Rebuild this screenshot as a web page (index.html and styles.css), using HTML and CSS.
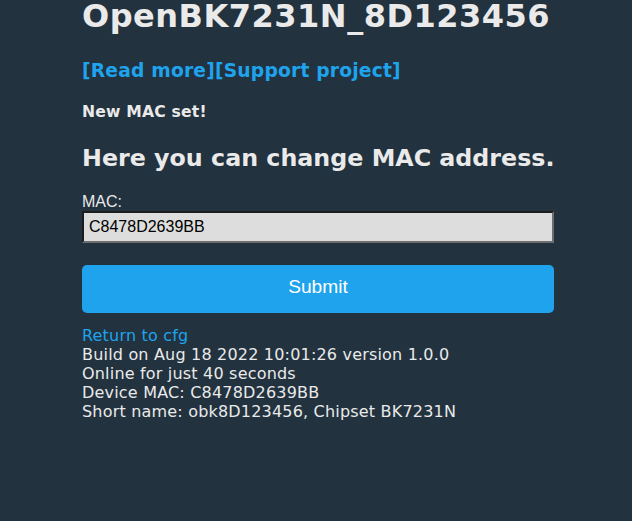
FILE: index.html
```html
<!DOCTYPE html>
<html lang="en">
<head>
    <meta charset="UTF-8">
    <meta name="viewport" content="width=device-width, initial-scale=1.0">
    <title>OpenBK7231N_8D123456</title>
    <link rel="stylesheet" href="styles.css">
</head>
<body>
    <div class="page">
        <h1 class="title">OpenBK7231N_8D123456</h1>
        <h3 class="links"><a href="#">[Read more]</a><a href="#">[Support project]</a></h3>

        <h4 class="notice">New MAC set!</h4>
        <h2 class="heading">Here you can change MAC address.</h2>

        <form id="mac-form">
            <label for="mac">MAC:</label>
            <input type="text" id="mac" value="C8478D2639BB">
            <button type="submit">Submit</button>
        </form>

        <div class="info">
            <a href="#">Return to cfg</a><br>
            Build on Aug 18 2022 10:01:26 version 1.0.0<br>
            Online for just 40 seconds<br>
            Device MAC: C8478D2639BB<br>
            Short name: obk8D123456, Chipset BK7231N
        </div>
    </div>
</body>
</html>
```

FILE: styles.css
```css
body {
    margin: 0;
    padding-left: 4px;
    background-color: #22323f;
    color: #eaeaea;
    font-family: "DejaVu Sans", Verdana, sans-serif;
    font-size: 16px;
}
a {
    color: #1fa3ec;
    text-decoration: none;
}
.page {
    width: 472px;
    margin: 0 auto;
}
.title {
    margin: 0;
    font-size: 32px;
    line-height: 32px;
    letter-spacing: 0.5px;
    white-space: nowrap;
}
.links {
    margin: 28px 0 0;
    font-size: 18.72px;
    line-height: 22px;
    letter-spacing: 0.18px;
}
.notice {
    margin: 21px 0 0;
    font-size: 15.6px;
    line-height: 19px;
    letter-spacing: 0.2px;
}
.heading {
    margin: 22px 0 0;
    font-size: 23.75px;
    line-height: 28px;
    white-space: nowrap;
}
form {
    display: flex;
    flex-direction: column;
    margin-top: 20px;
    font-family: "Liberation Sans", Arial, sans-serif;
}
label {
    font-size: 16px;
    line-height: 19px;
}
input {
    box-sizing: border-box;
    width: 100%;
    height: 32px;
    padding: 5px;
    border: 2px solid;
    border-color: #1c1c1c #6e6e6e #6e6e6e #1c1c1c;
    background-color: #dddddd;
    color: #000;
    font-family: "Liberation Sans", Arial, sans-serif;
    font-size: 16px;
}
button {
    margin-top: 22px;
    height: 48px;
    padding: 0 0 4px;
    line-height: 44px;
    border: none;
    border-radius: 5px;
    background-color: #1fa3ec;
    color: #fff;
    font-family: "Liberation Sans", Arial, sans-serif;
    font-size: 19.2px;
    cursor: pointer;
}
.info {
    margin-top: 13px;
    line-height: 19px;
    letter-spacing: 0.19px;
}
```
